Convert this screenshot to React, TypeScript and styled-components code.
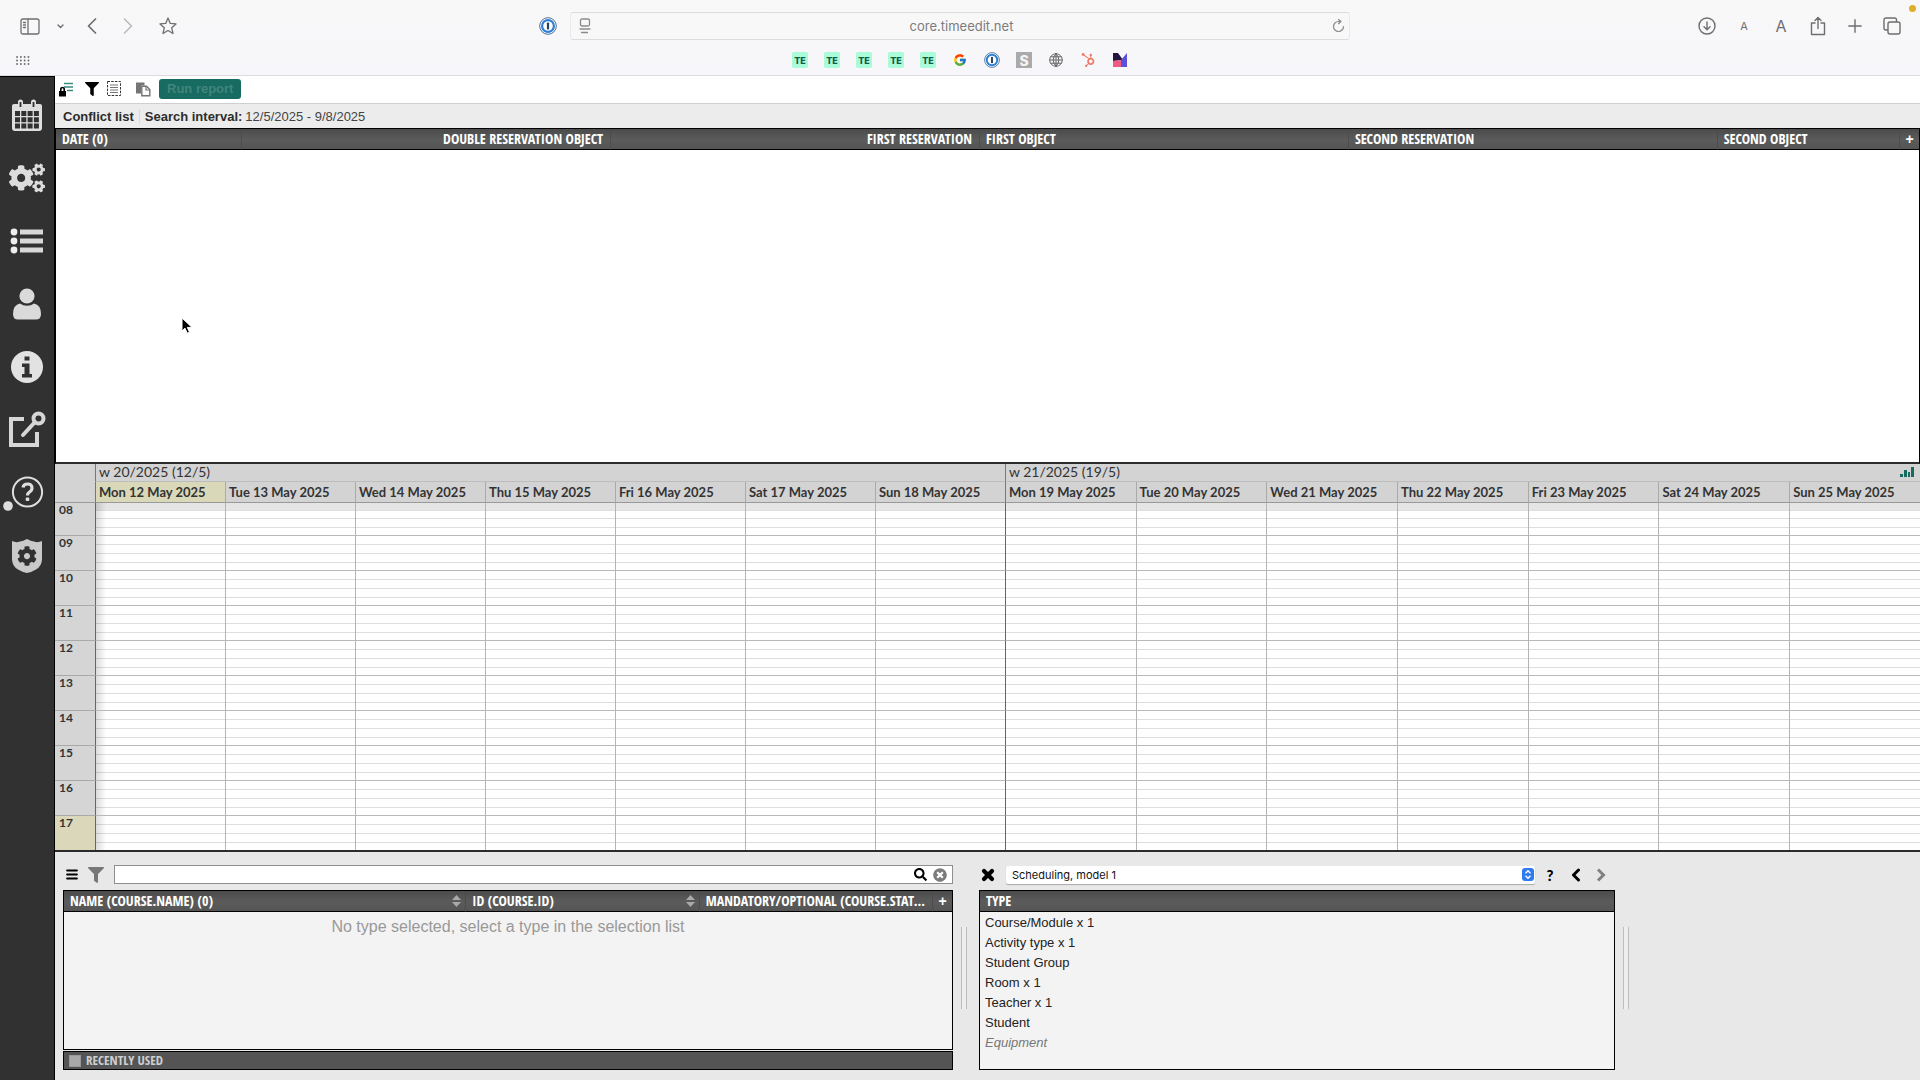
import React from "react";
import styled, { createGlobalStyle, css } from "styled-components";
import { FaCogs, FaCog, FaFilter, FaSearch, FaTimesCircle, FaHubspot } from "react-icons/fa";
import { FcGoogle } from "react-icons/fc";

const sans = `"Liberation Sans", Arial, sans-serif`;
const condensed = `"Open Sans Condensed", "Roboto Condensed", "Liberation Sans Narrow", "Open Sans", sans-serif`;
const lato = `Lato, "Liberation Sans", sans-serif`;
const ui = `Inter, "Liberation Sans", sans-serif`;
const teal = "#176b60";

const GlobalStyle = createGlobalStyle`
  *, *::before, *::after { box-sizing: border-box; }
  body { margin: 0; font-family: ${sans}; font-size: 13px; color: #222; background: #fff; }
  button { padding: 0; border: 0; background: none; font: inherit; color: inherit; }
  svg { display: block; }
  h1, p, ul { margin: 0; padding: 0; }
`;

const Page = styled.div`
  min-height: 100vh;
  display: flex;
  flex-direction: column;
`;

/* ---------- browser chrome ---------- */

const Chrome = styled.header`
  background: linear-gradient(#f8f8f8, #f7f7fb);
  border-bottom: 1px solid #dcdcde;
  color: #6e6e70;
  height: 76px;
`;

const ChromeBar = styled.div`
  display: grid;
  grid-template-columns: minmax(0, 1fr) minmax(0, 780px) minmax(0, 1fr);
  align-items: center;
  height: 52px;
`;

const ChromeGroup = styled.div<{ $end?: boolean }>`
  display: flex;
  align-items: center;
  height: 28px;
  padding: ${(p) => (p.$end ? "0 18px 0 0" : "0 12px 0 20px")};
  justify-content: ${(p) => (p.$end ? "flex-end" : "flex-start")};
  gap: ${(p) => (p.$end ? "17px" : "12px")};
`;

const ChromeButton = styled.button<{ $push?: boolean; $faint?: boolean; $w?: number }>`
  display: flex;
  align-items: center;
  justify-content: center;
  width: ${(p) => p.$w ?? 20}px;
  height: 24px;
  opacity: ${(p) => (p.$faint ? 0.45 : 1)};
  margin-left: ${(p) => (p.$push ? "auto" : "0")};
`;

const LetterButton = styled.button<{ $size: number }>`
  width: 20px;
  font: 400 ${(p) => p.$size}px ${ui};
`;

const Address = styled.label`
  display: flex;
  align-items: center;
  height: 28px;
  padding: 0 4px 0 8px;
  border: 1px solid #dcdcde;
  border-left-color: #ebebed;
  border-right-color: #ebebed;
  border-radius: 3px;
  background: #f8f8f9;
  color: #8a8a8c;
`;

const AddressInput = styled.input`
  flex: 1;
  min-width: 0;
  border: 0;
  outline: 0;
  background: none;
  text-align: center;
  font: 13px ${ui};
  color: #7c7c7e;
`;

const Favourites = styled.nav`
  display: grid;
  grid-template-columns: 1fr auto 1fr;
  align-items: center;
  height: 16px;
  padding-left: 16px;
  padding-right: 16px;
`;

const FavList = styled.div`
  display: flex;
  gap: 16px;
`;

const Fav = styled.a<{ $tone?: "te" | "s" }>`
  display: flex;
  align-items: center;
  justify-content: center;
  width: 16px;
  height: 16px;
  color: #666;
  text-decoration: none;
  font: 800 9px ${ui};
  ${(p) => p.$tone === "te" && css`background: #a9fbd9; color: #125c48; border-radius: 2px;`}
  ${(p) => p.$tone === "s" && css`background: #aaa; color: #f4f4f4; font-size: 14px;`}
`;

const RecordingDot = styled.span`
  position: absolute;
  top: 5px;
  right: 4px;
  width: 7px;
  height: 7px;
  border-radius: 50%;
  background: #dfae2b;
`;

/* ---------- application frame ---------- */

const Body = styled.div`
  flex: 1;
  display: flex;
`;

const Sidebar = styled.nav`
  flex: none;
  width: 55px;
  padding-top: 6px;
  background: #313131;
  border-right: 1px solid #000;
  border-top: 1px solid #000;
`;

const SideButton = styled.button`
  display: flex;
  align-items: center;
  justify-content: center;
  width: 54px;
  height: 63px;
  color: #dcdcdc;
`;

const Main = styled.main`
  flex: 1;
  min-width: 0;
  display: flex;
  flex-direction: column;
`;

const Toolbar = styled.div`
  display: flex;
  align-items: center;
  height: 28px;
  padding: 0 4px 2px;
  border-bottom: 1px solid #cfcfcf;
`;

const ToolButton = styled.button<{ $gap: number }>`
  display: flex;
  margin-right: ${(p) => p.$gap}px;
`;

const RunButton = styled.button`
  height: 20px;
  padding: 0 8px;
  border-radius: 3px;
  background: ${teal};
  color: #41857c;
  font: 700 13px ${sans};
  &:disabled { color: #41857c; }
`;

const InfoBar = styled.div`
  display: flex;
  align-items: center;
  height: 24px;
  padding-left: 8px;
  background: #ececec;
  font-size: 13px;
  color: #444;
`;

const InfoTitle = styled.h1`
  font-size: 13px;
  color: #2c2c2c;
  padding-right: 5px;
  margin-right: 5px;
  border-right: 1px solid #dadada;
`;

const InfoLabel = styled.strong`
  color: #2c2c2c;
  margin-right: 3px;
`;

/* ---------- dark-headed lists ---------- */

const ListTable = styled.table`
  width: 100%;
  table-layout: fixed;
  border-collapse: separate;
  border-spacing: 0;
`;

const HeadRow = styled.tr`
  height: 21px;
  background: linear-gradient(#4b4b4b, #5b5b5b 50%, #545454);
`;

const HeadCell = styled.th<{ $right?: boolean }>`
  padding: 0 ${(p) => (p.$right ? 7 : 4)}px 0 6px;
  border-right: 1px solid #4c4c4c;
  border-bottom: 1px solid #000;
  font: 700 14px/20px ${condensed};
  color: #fff;
  text-align: ${(p) => (p.$right ? "right" : "left")};
  white-space: nowrap;
  overflow: hidden;
  text-overflow: ellipsis;
  &:last-child { border-right: 0; }
`;

const HeadInner = styled.div`
  display: flex;
  align-items: center;
  justify-content: space-between;
`;

const PlusCell = styled.th`
  padding: 0;
  border-bottom: 1px solid #000;
  line-height: 18px;
`;

const PlusButton = styled.button`
  display: block;
  width: 100%;
  font: 700 14px/18px ${sans};
  color: #fff;
`;

const ConflictBox = styled.section`
  flex: 1;
  min-height: 120px;
  border: 1px solid #000;
  border-bottom: 2px solid #2b2b2e;
`;

/* ---------- calendar ---------- */

const Calendar = styled.table`
  width: 100%;
  table-layout: fixed;
  border-collapse: separate;
  border-spacing: 0;
  font-family: ${lato};
  color: #333;
  border-bottom: 2px solid #2b2b2e;
`;

const WeekCell = styled.th`
  height: 18px;
  padding: 0 5px 0 3px;
  background: #d3d3d3;
  border-bottom: 1px solid #bdbdbd;
  border-left: 1px solid #777;
  font: 400 14px/16px ${lato};
  text-align: left;
  vertical-align: top;
`;

const WeekInner = styled.div`
  display: flex;
  align-items: center;
  justify-content: space-between;
`;

const Corner = styled.td`
  background: #d3d3d3;
  border-bottom: 1px solid #999;
`;

const DayCell = styled.th<{ $today?: boolean; $first?: boolean }>`
  height: 21px;
  padding: 0 3px;
  background: ${(p) => (p.$today ? "#d9d8b9" : "#d3d3d3")};
  border-bottom: 1px solid #999;
  border-left: 1px solid ${(p) => (p.$first ? "#777" : "#aaa")};
  font: 700 13px/20px ${lato};
  text-align: left;
  white-space: nowrap;
  overflow: hidden;
`;

const HourRow = styled.tr<{ $h: number }>`
  height: ${(p) => p.$h}px;
`;

const HourCell = styled.th<{ $now?: boolean; $last?: boolean }>`
  padding: 0 4px;
  background: ${(p) => (p.$now ? "#dad7ba" : "#d5d5d5")};
  border-bottom: ${(p) => (p.$last ? "0" : "1px solid #a9a9a9")};
  font: 700 12px/14px ${lato};
  text-align: left;
  vertical-align: top;
`;

const quarter = (from: number) => `transparent ${from}px, #dedede ${from}px, #dedede ${from + 1}px, transparent ${from + 1}px`;

const SlotCell = styled.td<{ $short?: boolean; $first?: boolean; $edge?: boolean; $last?: boolean }>`
  padding: 0;
  border-left: 1px solid ${(p) => (p.$first ? "#666" : "#b4b4b4")};
  border-bottom: ${(p) => (p.$last ? "0" : "1px solid #b9b9b9")};
  background-image:
    ${(p) => p.$edge && "linear-gradient(90deg, rgba(0,0,0,0.14), transparent 10px),"}
    ${(p) =>
      p.$short
        ? `linear-gradient(${quarter(7)}, ${quarter(15)}, ${quarter(24)}), linear-gradient(#e5e5e5 7px, transparent 7px)`
        : `linear-gradient(${quarter(8)}, ${quarter(17)}, ${quarter(26)})`};
`;

/* ---------- bottom panels ---------- */

const Bottom = styled.section`
  display: grid;
  grid-template-columns: minmax(0, 890fr) 26px minmax(0, 636fr) 20px minmax(0, 285fr);
  padding: 13px 0 10px 8px;
  background: #e8e8e8;
`;

const Pane = styled.div`
  display: flex;
  flex-direction: column;
`;

const PaneBar = styled.div`
  display: flex;
  align-items: center;
  height: 19px;
  margin-bottom: 6px;
`;

const PaneButton = styled.button<{ $w: number; $mark?: boolean }>`
  flex: none;
  display: flex;
  align-items: center;
  justify-content: center;
  width: ${(p) => p.$w}px;
  height: 19px;
  color: #000;
  ${(p) => p.$mark && css`font: 900 15px ${lato};`}
`;

const SearchBox = styled.label`
  flex: 1;
  display: flex;
  align-items: center;
  height: 19px;
  margin-left: 4px;
  padding-right: 2px;
  border: 1px solid #8e8e8e;
  background: #fff;
`;

const SearchInput = styled.input`
  flex: 1;
  min-width: 0;
  border: 0;
  outline: 0;
  background: none;
  font: 13px ${sans};
`;

const ListBox = styled.div<{ $h: number }>`
  min-height: ${(p) => p.$h}px;
  border: 1px solid #000;
  background: #f3f3f3;
`;

const EmptyNote = styled.p`
  padding-top: 5px;
  text-align: center;
  font-size: 16px;
  line-height: 20px;
  color: #999;
`;

const RecentBar = styled.label`
  display: flex;
  align-items: center;
  gap: 5px;
  height: 19px;
  margin-top: 1px;
  padding-left: 5px;
  border: 1px solid #000;
  background: #545454;
  color: #cfcfcf;
  font: 700 13px/17px ${condensed};
`;

const RecentCheck = styled.input`
  appearance: none;
  width: 12px;
  height: 12px;
  margin: 0;
  background: #a8a8a8;
  border: 1px solid #999;
`;

const Splitter = styled.div`
  align-self: center;
  width: 6px;
  height: 82px;
  margin-left: 8px;
  border: 1px solid #bdbdbd;
  border-width: 0 1px;
  background: #eee;
`;

const SelectWrap = styled.div`
  flex: 1;
  display: flex;
  align-items: center;
  height: 18px;
  margin: 0 4px 0 9px;
  padding-right: 1px;
  background: #fff;
  border-radius: 2px;
  box-shadow: 0 1px 1px #aaa;
`;

const ModelSelect = styled.select`
  appearance: none;
  flex: 1;
  min-width: 0;
  padding: 0 6px;
  border: 0;
  background: none;
  font: 11px ${ui};
  color: #111;
`;

const TypeList = styled.tbody`
  font-size: 13px;
  color: #222;
`;

const TypeCell = styled.td<{ $muted?: boolean }>`
  height: 20px;
  padding: 0 5px;
  line-height: 20px;
  ${(p) => p.$muted && css`font-style: italic; color: #777;`}
`;

const TypeSpacer = styled.tr`
  height: 1px;
`;

const Pointer = styled.svg`
  position: absolute;
  left: 181px;
  top: 317px;
  pointer-events: none;
`;

/* ---------- drawings ---------- */

const Stroke = ({ w, h, d, sw = 1.4 }: { w: number; h: number; d: string; sw?: number }) => (
  <svg width={w} height={h} viewBox={`0 0 ${w} ${h}`} fill="none" stroke="currentColor" strokeWidth={sw} strokeLinecap="round" strokeLinejoin="round">
    <path d={d} />
  </svg>
);

const OnePassword = () => (
  <svg width="18" height="18" viewBox="0 0 18 18">
    <circle cx="9" cy="9" r="8.3" fill="#fff" stroke="#4c6f99" strokeWidth="1" />
    <circle cx="9" cy="9" r="5.9" fill="#fff" stroke="#2f7fd6" strokeWidth="2.2" />
    <rect x="7.9" y="5.4" width="2.2" height="7.2" rx="0.8" fill="#24415f" />
  </svg>
);

const CalendarIcon = () => (
  <svg width="30" height="32" viewBox="0 0 30 32" fill="#dedede">
    <path fillRule="evenodd" d="M2 5h4V3a2.4 2.4 0 0 1 5 0v2h8V3a2.4 2.4 0 0 1 5 0v2h4q2 0 2 2v22q0 3-3 3H3q-3 0-3-3V7q0-2 2-2zM7.600 3v5h1.800V3zM20.600 3v5h1.800V3zM3 12v5h5v-5zM9.300 12v5h5v-5zM15.600 12v5h5v-5zM21.900 12v5h5v-5zM3 18.300v5h5v-5zM9.300 18.300v5h5v-5zM15.600 18.300v5h5v-5zM21.900 18.300v5h5v-5zM3 24.600v5h5v-5zM9.300 24.600v5h5v-5zM15.600 24.600v5h5v-5zM21.900 24.600v5h5v-5z" />
  </svg>
);

const ListIcon = () => (
  <svg width="34" height="26" viewBox="0 0 34 26" fill="#d8d8d8">
    {[4, 13, 22].map((y) => (
      <g key={y}>
        <circle cx="4" cy={y} r="3.4" fill="#eee" />
        <rect x="10" y={y - 2.5} width="23" height="5" />
      </g>
    ))}
  </svg>
);

const UserIcon = () => (
  <svg width="30" height="32" viewBox="0 0 30 32" fill="#dadada">
    <circle cx="15" cy="8" r="7.6" />
    <path d="M8 15.500q3 2.200 7 2.200t7-2.200q7 1.500 7 10.500 0 5.500-5 5.500H6q-5 0-5-5.500 0-9 7-10.500z" />
  </svg>
);

const InfoIcon = () => (
  <svg width="32" height="32" viewBox="0 0 32 32">
    <circle cx="16" cy="16" r="16" fill="#e2e2e2" />
    <path fill="#313131" d="M13.500 5.500h5v4h-5zM11 12.500h7.500v10.500H21v3.500H11V23h2.500v-7H11z" />
  </svg>
);

const LinkIcon = () => (
  <svg width="38" height="38" viewBox="0 0 38 38" fill="none" stroke="#d6d6d6" strokeWidth="4">
    <path d="M16 8H3v26h26V21" />
    <circle cx="30.5" cy="7.5" r="5" />
    <path d="M27 11 15 24" strokeLinecap="round" />
  </svg>
);

const HelpIcon = () => (
  <svg width="48" height="36" viewBox="3 0 48 36" fill="none">
    <circle cx="27.5" cy="17" r="14.6" stroke="#dedede" strokeWidth="2" />
    <path d="M23 12.500q.5-3.500 4.500-3.500 4.500 0 4.500 4 0 2.500-2.500 4-2 1.200-2 3.500" stroke="#dedede" strokeWidth="3.2" />
    <rect x="25.7" y="22.5" width="3.6" height="3.6" rx="1" fill="#dedede" />
    <circle cx="8" cy="31" r="4.8" fill="#dedede" />
  </svg>
);

const ShieldIcon = () => (
  <svg width="32" height="34" viewBox="0 0 32 34">
    <path fill="#c9c9c9" d="M1 2q4 2 8 .5 3-.5 7-2.500 4 2 7 2.500 4 1.500 8-.5v18q0 7-6 10.500-5 3-9 3.500-4-.5-9-3.500Q1 27 1 20z" />
    <FaCog x="6" y="7" size={20} color="#313131" />
  </svg>
);

const LockListIcon = () => (
  <svg width="16" height="16" viewBox="0 0 16 16">
    <path d="M5 2.500h9M5 6h9M8 9.500h6" stroke="#3d8a80" strokeWidth="1.6" />
    <path d="M0 10h7v5.500H0z" fill="#000" />
    <path d="M1.800 10V8.200q0-1.700 1.700-1.700t1.700 1.700V10" fill="none" stroke="#000" strokeWidth="1.6" />
  </svg>
);

const SelectAreaIcon = () => (
  <svg width="14" height="15" viewBox="0 0 14 15" fill="none" stroke="#333">
    <rect x=".5" y=".5" width="13" height="14" strokeDasharray="2.5 1.2" />
    <path d="M3 4h8M3 6.500h8M3 9h8M3 11.500h8" stroke="#777" />
  </svg>
);

const CopyIcon = () => (
  <svg width="16" height="16" viewBox="0 0 16 16">
    <path d="M1 1.500h8.500v3H6v8H1z" fill="#757575" />
    <path d="M6.800 5.200h4.700l3.300 3.300v6.300h-8z" fill="#fff" stroke="#757575" strokeWidth="1.4" />
    <path d="M11 5v4h4" fill="none" stroke="#757575" strokeWidth="1.2" />
  </svg>
);

const SortIcon = () => (
  <svg width="9" height="12" viewBox="0 0 9 12" fill="#a9a9a9">
    <path d="M4.500 0 9 5H0zM4.500 12 0 7h9z" />
  </svg>
);

const ChartIcon = () => (
  <svg width="16" height="12" viewBox="0 0 16 12" fill={teal}>
    <path d="M1 8h3v3H1zM5 4h3v7H5zM9 6h2v5H9zM12 1h3v10h-3z" />
  </svg>
);

const StepperIcon = () => (
  <svg width="12" height="13" viewBox="0 0 12 13">
    <rect width="12" height="13" rx="3" fill="#2f7bf0" />
    <path d="M3.500 5.200 6 2.800l2.500 2.400M3.500 7.800 6 10.200l2.500-2.400" fill="none" stroke="#fff" strokeWidth="1.4" />
  </svg>
);

const MosaicIcon = () => (
  <svg width="14" height="14" viewBox="0 0 14 14">
    <path d="M0 0h5l5 7-10 1z" fill="#23153d" />
    <path d="M0 8l9-1v7H0z" fill="#ee5a84" />
    <path d="M14 0v14H8V7z" fill="#5b50d6" />
  </svg>
);

/* ---------- data ---------- */

const weeks = ["w 20/2025 (12/5)", "w 21/2025 (19/5)"];
const weekdays = ["Mon", "Tue", "Wed", "Thu", "Fri", "Sat", "Sun"];
const days = Array.from({ length: 14 }, (_, i) => `${weekdays[i % 7]} ${12 + i} May 2025`);
const hours = ["08", "09", "10", "11", "12", "13", "14", "15", "16", "17"];
const types = ["Course/Module x 1", "Activity type x 1", "Student Group", "Room x 1", "Teacher x 1", "Student"];

const sideItems = [
  { label: "Calendar", icon: <CalendarIcon /> },
  { label: "Settings", icon: <FaCogs size={36} /> },
  { label: "Lists", icon: <ListIcon /> },
  { label: "User", icon: <UserIcon /> },
  { label: "Information", icon: <InfoIcon /> },
  { label: "External link", icon: <LinkIcon /> },
  { label: "Help", icon: <HelpIcon /> },
  { label: "Administration", icon: <ShieldIcon /> },
];

const BrowserChrome = () => (
  <Chrome>
    <ChromeBar>
      <ChromeGroup>
        <ChromeButton aria-label="Sidebar"><Stroke w={20} h={17} sw={1.3} d="M3 1h14q2 0 2 2v11q0 2-2 2H3q-2 0-2-2V3q0-2 2-2zM8 1v15M3.500 4.500h2M3.500 7h2M3.500 9.500h2" /></ChromeButton>
        <ChromeButton aria-label="Tab groups" $w={16}><Stroke w={7} h={5} d="M1 1l2.500 2.500L6 1" /></ChromeButton>
        <ChromeButton aria-label="Back" $w={24}><Stroke w={10} h={16} sw={1.7} d="M8.500 1 1.500 8l7 7" /></ChromeButton>
        <ChromeButton aria-label="Forward" $faint $w={24}><Stroke w={10} h={16} sw={1.5} d="M1.500 1l7 7-7 7" /></ChromeButton>
        <ChromeButton aria-label="Bookmark" $w={32}><Stroke w={18} h={18} sw={1.3} d="M9 1l2.300 5.400 5.700.5-4.300 3.900 1.300 5.700L9 13.500 4 16.500l1.300-5.700L1 6.900l5.700-.5z" /></ChromeButton>
        <ChromeButton aria-label="1Password" $push><OnePassword /></ChromeButton>
      </ChromeGroup>
      <Address>
        <Stroke w={12} h={16} sw={1.3} d="M3 1h6q1.500 0 1.500 1.500v4Q10.500 8 9 8H3Q1.500 8 1.500 6.500v-4Q1.500 1 3 1zM1 11h10M2.500 14.500h6" />
        <AddressInput aria-label="Address" defaultValue="core.timeedit.net" />
        <Stroke w={13} h={14} sw={1.2} d="M11.500 7.500a5 5 0 1 1-5-5h2M6.500 0.500l2.500 2-2.500 2.200" />
      </Address>
      <ChromeGroup $end>
        <ChromeButton aria-label="Downloads"><Stroke w={18} h={18} sw={1.4} d="M9 1a8 8 0 1 0 0 16A8 8 0 1 0 9 1zM9 5v7.500M6 9.700l3 3 3-3" /></ChromeButton>
        <LetterButton $size={11}>A</LetterButton>
        <LetterButton $size={16}>A</LetterButton>
        <ChromeButton aria-label="Share"><Stroke w={16} h={20} sw={1.4} d="M5 7H1.500v11.500h13V7H11M8 12.500V1.500M5 4.500l3-3 3 3" /></ChromeButton>
        <ChromeButton aria-label="New tab"><Stroke w={14} h={14} d="M7 0.800v12.400M0.800 7h12.400" /></ChromeButton>
        <ChromeButton aria-label="Tabs"><Stroke w={18} h={18} sw={1.4} d="M7 5h8q2 0 2 2v8q0 2-2 2H7q-2 0-2-2V7q0-2 2-2zM13.500 5V3q0-2-2-2H3Q1 1 1 3v8q0 2 2 2h2" /></ChromeButton>
      </ChromeGroup>
    </ChromeBar>
    <Favourites>
      <Stroke w={14} h={9} sw={1.8} d="M1 1h.1M4.800 1h.1M8.600 1h.1M12.400 1h.1M1 4.500h.1M4.800 4.500h.1M8.600 4.500h.1M12.400 4.500h.1M1 8h.1M4.800 8h.1M8.600 8h.1M12.400 8h.1" />
      <FavList>
        {[1, 2, 3, 4, 5].map((n) => <Fav key={n} href="#" $tone="te">TE</Fav>)}
        <Fav href="#" aria-label="Google"><FcGoogle size={14} /></Fav>
        <Fav href="#" aria-label="1Password"><OnePassword /></Fav>
        <Fav href="#" $tone="s">S</Fav>
        <Fav href="#" aria-label="Web"><Stroke w={14} h={14} sw={1} d="M7 .7a6.300 6.300 0 1 0 0 12.600A6.300 6.300 0 1 0 7 .7zM7 .7v12.600M.7 7h12.600M7 .7q-6 6.300 0 12.600M7 .7q6 6.300 0 12.600M1.600 3.800h10.800M1.600 10.200h10.800" /></Fav>
        <Fav href="#" aria-label="HubSpot"><FaHubspot size={14} color="#ee7a68" /></Fav>
        <Fav href="#" aria-label="Mosaic"><MosaicIcon /></Fav>
      </FavList>
    </Favourites>
    <RecordingDot />
  </Chrome>
);

const ConflictList = () => (
  <ConflictBox>
    <ListTable>
      <colgroup>
        <col style={{ width: "10%" }} />
        <col style={{ width: "19.8%" }} />
        <col style={{ width: "19.8%" }} />
        <col style={{ width: "19.8%" }} />
        <col style={{ width: "19.8%" }} />
        <col />
        <col width={19} />
      </colgroup>
      <thead>
        <HeadRow>
          <HeadCell>DATE (0)</HeadCell>
          <HeadCell $right>DOUBLE RESERVATION OBJECT</HeadCell>
          <HeadCell $right>FIRST RESERVATION</HeadCell>
          <HeadCell>FIRST OBJECT</HeadCell>
          <HeadCell>SECOND RESERVATION</HeadCell>
          <HeadCell>SECOND OBJECT</HeadCell>
          <PlusCell><PlusButton>+</PlusButton></PlusCell>
        </HeadRow>
      </thead>
    </ListTable>
  </ConflictBox>
);

const CalendarGrid = () => (
  <Calendar>
    <colgroup>
      <col width={40} />
      {days.map((d, i) => <col key={d} width={i < 7 ? "6.97%" : undefined} />)}
    </colgroup>
    <thead>
      <tr>
        <Corner rowSpan={2} />
        {weeks.map((w, i) => (
          <WeekCell key={w} colSpan={7}>
            <WeekInner>{w}{i === 1 && <ChartIcon />}</WeekInner>
          </WeekCell>
        ))}
      </tr>
      <tr>{days.map((d, i) => <DayCell key={d} $today={i === 0} $first={i % 7 === 0}>{d}</DayCell>)}</tr>
    </thead>
    <tbody>
      {hours.map((h, r) => (
        <HourRow key={h} $h={r === 0 ? 33 : r === hours.length - 1 ? 34 : 35}>
          <HourCell $now={h === "17"} $last={r === 9}>{h}</HourCell>
          {days.map((d, i) => (
            <SlotCell key={d} $short={r === 0} $first={i % 7 === 0} $edge={i === 0} $last={r === 9} />
          ))}
        </HourRow>
      ))}
    </tbody>
  </Calendar>
);

const ObjectPane = () => (
  <Pane>
    <PaneBar>
      <PaneButton aria-label="Menu" $w={18}><Stroke w={12} h={11} sw={2.2} d="M1.200 1.500h9.600M1.200 5.500h9.600M1.200 9.500h9.600" /></PaneButton>
      <PaneButton aria-label="Filter" $w={29}><FaFilter size={16} color="#777" /></PaneButton>
      <SearchBox>
        <SearchInput aria-label="Search objects" />
        <PaneButton as="span" $w={20}><FaSearch size={13} /></PaneButton>
        <PaneButton aria-label="Clear" $w={20}><FaTimesCircle size={14} color="#7c7c7c" /></PaneButton>
      </SearchBox>
    </PaneBar>
    <ListBox $h={160}>
      <ListTable>
        <colgroup>
          <col style={{ width: "45.3%" }} />
          <col style={{ width: "26.3%" }} />
          <col />
          <col width={19} />
        </colgroup>
        <thead>
          <HeadRow>
            <HeadCell><HeadInner>NAME (COURSE.NAME) (0)<SortIcon /></HeadInner></HeadCell>
            <HeadCell><HeadInner>ID (COURSE.ID)<SortIcon /></HeadInner></HeadCell>
            <HeadCell>MANDATORY/OPTIONAL (COURSE.STAT...</HeadCell>
            <PlusCell><PlusButton>+</PlusButton></PlusCell>
          </HeadRow>
        </thead>
      </ListTable>
      <EmptyNote>No type selected, select a type in the selection list</EmptyNote>
    </ListBox>
    <RecentBar><RecentCheck type="checkbox" />RECENTLY USED</RecentBar>
  </Pane>
);

const TypePane = () => (
  <Pane>
    <PaneBar>
      <PaneButton aria-label="Close" $w={18}><Stroke w={14} h={14} sw={4.2} d="M3 3l8 8M11 3l-8 8" /></PaneButton>
      <SelectWrap>
        <ModelSelect aria-label="Model" defaultValue="m1">
          <option value="m1">Scheduling, model 1</option>
        </ModelSelect>
        <StepperIcon />
      </SelectWrap>
      <PaneButton $w={22} $mark>?</PaneButton>
      <PaneButton aria-label="Previous" $w={30}><Stroke w={10} h={14} sw={3} d="M7.500 2 2.500 7l5 5" /></PaneButton>
      <PaneButton aria-label="Next" $w={20}><svg width="10" height="14" fill="none" stroke="#808080" strokeWidth="3"><path d="M2 1.500 7.500 7 2 12.500" /></svg></PaneButton>
      <PaneButton as="span" $w={4} />
    </PaneBar>
    <ListBox $h={180}>
      <ListTable>
        <thead><HeadRow><HeadCell>TYPE</HeadCell></HeadRow></thead>
        <TypeList>
          <TypeSpacer />
          {types.map((t) => <tr key={t}><TypeCell>{t}</TypeCell></tr>)}
          <tr><TypeCell $muted>Equipment</TypeCell></tr>
        </TypeList>
      </ListTable>
    </ListBox>
  </Pane>
);

export default function App() {
  return (
    <Page>
      <GlobalStyle />
      <BrowserChrome />
      <Body>
        <Sidebar>
          {sideItems.map((s) => <SideButton key={s.label} aria-label={s.label}>{s.icon}</SideButton>)}
        </Sidebar>
        <Main>
          <Toolbar>
            <ToolButton aria-label="Locked list" $gap={10}><LockListIcon /></ToolButton>
            <ToolButton aria-label="Filter" $gap={8}><FaFilter size={14} color="#000" /></ToolButton>
            <ToolButton aria-label="Select area" $gap={14}><SelectAreaIcon /></ToolButton>
            <ToolButton aria-label="Copy" $gap={8}><CopyIcon /></ToolButton>
            <RunButton disabled>Run report</RunButton>
          </Toolbar>
          <InfoBar>
            <InfoTitle>Conflict list</InfoTitle>
            <InfoLabel>Search interval:</InfoLabel>
            <span>12/5/2025 - 9/8/2025</span>
          </InfoBar>
          <ConflictList />
          <CalendarGrid />
          <Bottom>
            <ObjectPane />
            <Splitter />
            <TypePane />
            <Splitter />
          </Bottom>
        </Main>
      </Body>
      <Pointer width="12" height="18" viewBox="0 0 12 18"><path d="M1 1v13l3-2.800 2.200 5 2.300-1-2.200-4.800H11z" fill="#000" stroke="#fff" strokeWidth="1" /></Pointer>
    </Page>
  );
}
